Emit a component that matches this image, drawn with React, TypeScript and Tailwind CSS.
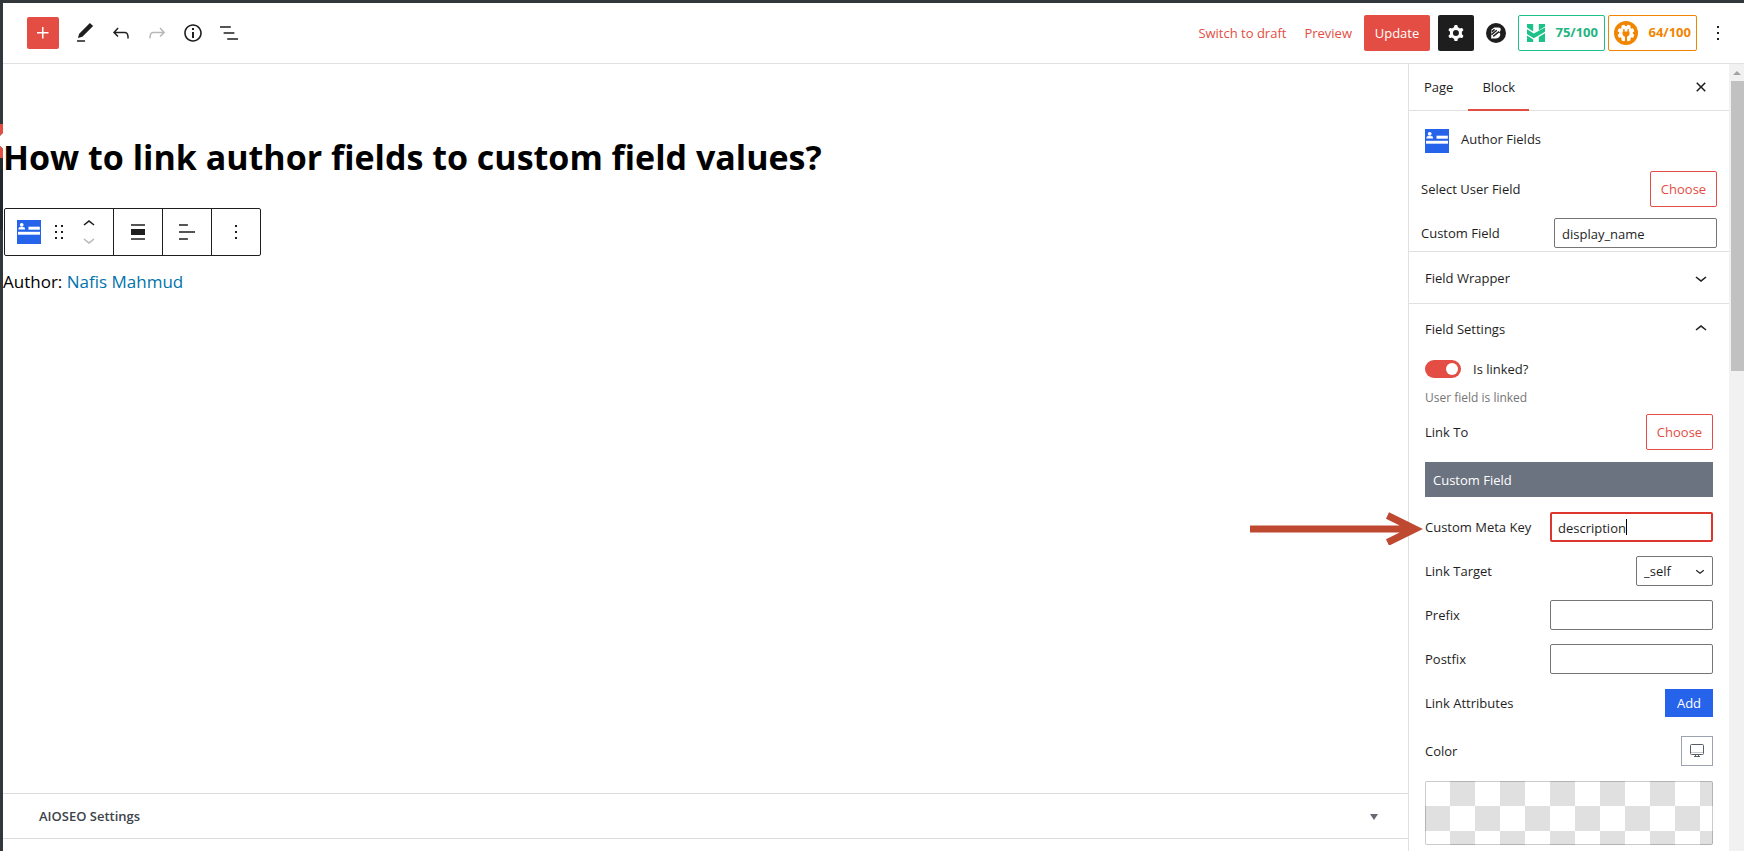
import type { ReactNode } from 'react';

const icons = {
  plus: 'M11 12.5V17.5H12.5V12.5H17.5V11H12.5V6H11V11H6V12.5H11Z',
  pencil: 'M20.1 5.1L16.9 2 6.2 12.7l-1.3 4.4 4.5-1.3L20.1 5.1zM4 20.8h8v-1.5H4v1.5z',
  undo: 'M18.3 11.7c-.6-.6-1.4-.9-2.3-.9H6.7l2.9-3.3-1.1-1-4.5 5L8.5 16l1-1-2.7-2.7H16c.5 0 .9.2 1.3.5 1 1 1 3.4 1 4.5v.3h1.5v-.2c0-1.5 0-4.3-1.5-5.7z',
  redo: 'M15.6 6.5l-1.1 1 2.9 3.3H8c-.9 0-1.7.3-2.3.9-1.4 1.5-1.4 4.2-1.4 5.6v.2h1.5v-.3c0-1.1 0-3.5 1-4.5.3-.3.7-.5 1.3-.5h9.2L14.5 15l1.1 1.1 4.6-4.6-4.6-5z',
  info: 'M12 3.2c-4.8 0-8.8 3.9-8.8 8.8 0 4.8 3.9 8.8 8.8 8.8 4.8 0 8.8-3.9 8.8-8.8 0-4.8-4-8.8-8.8-8.8zm0 16c-4 0-7.2-3.3-7.2-7.2C4.8 8 8 4.8 12 4.8s7.2 3.3 7.2 7.2c0 4-3.2 7.2-7.2 7.2zM11 17h2v-6h-2v6zm0-8h2V7h-2v2z',
  list: 'M13.8 5.2H3v1.5h10.8V5.2zm-3.6 12v1.5H21v-1.5H10.2zm7.2-6H6.6v1.5h10.8v-1.5z',
  cog: 'M10.289 4.836A1 1 0 0111.275 4h1.306a1 1 0 01.987.836l.244 1.466c.787.26 1.503.679 2.108 1.218l1.393-.522a1 1 0 011.216.437l.653 1.13a1 1 0 01-.23 1.273l-1.148.944a6.025 6.025 0 010 2.435l1.149.946a1 1 0 01.23 1.272l-.653 1.13a1 1 0 01-1.216.437l-1.394-.522c-.605.54-1.32.958-2.108 1.218l-.244 1.466a1 1 0 01-.987.836h-1.306a1 1 0 01-.986-.836l-.244-1.466a5.995 5.995 0 01-2.108-1.218l-1.394.522a1 1 0 01-1.217-.436l-.653-1.131a1 1 0 01.23-1.272l1.149-.946a6.026 6.026 0 010-2.435l-1.148-.944a1 1 0 01-.23-1.272l.653-1.131a1 1 0 011.217-.437l1.393.522a5.994 5.994 0 012.108-1.218l.244-1.466zM14.929 12a3 3 0 11-6 0 3 3 0 016 0z',
  more: 'M13 19h-2v-2h2v2zm0-6h-2v-2h2v2zm0-6h-2V5h2v2z',
  close: 'M12 13.06l3.712 3.713 1.061-1.06L13.061 12l3.712-3.712-1.06-1.06L12 10.938 8.288 7.227l-1.061 1.06L10.939 12l-3.712 3.712 1.06 1.061L12 13.061z',
  down: 'M17.5 11.6L12 16l-5.5-4.4.9-1.2L12 14l4.5-3.6 1 1.2z',
  up: 'M6.5 12.4L12 8l5.5 4.4-.9 1.2L12 10l-4.5 3.6-1-1.2z',
  drag: 'M8 7h2V5H8v2zm0 6h2v-2H8v2zm0 6h2v-2H8v2zm6-14v2h2V5h-2zm0 8h2v-2h-2v2zm0 6h2v-2h-2v2z',
  blockAlign: 'M5 15h14V9H5v6zm0 4.8h14v-1.5H5v1.5zM5 4.2v1.5h14V4.2H5z',
  textAlign: 'M4 19.8h8.9v-1.5H4v1.5zm8.9-15.6H4v1.5h8.9V4.2zm-8.9 7v1.5h16v-1.5H4z',
};

function Icon({ name, className = 'size-6' }: { name: keyof typeof icons; className?: string }) {
  return (
    <svg viewBox="0 0 24 24" className={`shrink-0 ${className}`} fill="currentColor" fillRule="evenodd" aria-hidden="true">
      <path d={icons[name]} />
    </svg>
  );
}

function AuthorIcon() {
  return (
    <svg viewBox="0 0 24 24" className="size-6 shrink-0" aria-hidden="true">
      <rect width="24" height="24" fill="#2563eb" />
      <g fill="#fff">
        <circle cx="4.7" cy="4.8" r="1.9" />
        <path d="M1.5 9.5V8.4q0-1.4 3.2-1.4T8 8.4v1.1z" />
        <rect x="11.5" y="6.7" width="11.3" height="3" />
        <rect x="1" y="11.8" width="22" height="2.9" />
      </g>
    </svg>
  );
}

function ToolButton({ label, icon, className = '' }: { label: string; icon: keyof typeof icons; className?: string }) {
  return (
    <button aria-label={label} className={`flex size-9 items-center justify-center ${className}`}>
      <Icon name={icon} />
    </button>
  );
}

function BrizyIcon() {
  return (
    <svg viewBox="0 0 20 20" className="size-5" aria-hidden="true">
      <circle cx="10" cy="10" r="10" fill="#1e1e1e" />
      <path d="M5.500 6.500L8.300 4.500H12.500c2 0 2.800 1.500 2 3.100-.4.900-1 1.500-1.700 1.900 1.500.6 1.800 1.900 1.200 3.200-.8 1.800-2.300 2.800-4.200 2.800H5.200V12.200z" fill="#fff" />
      <path d="M5.400 11.600L10.800 7.200M7.200 13.400L13 8.600M8.600 6.400L6 8.600" stroke="#1e1e1e" strokeWidth="1.400" />
    </svg>
  );
}

function HeadlineIcon() {
  return (
    <svg viewBox="0 0 18 18" className="size-[18px]" fill="#1cc288" aria-hidden="true">
      <path d="M0 0h6.200v7.600L0 3.600z" />
      <path d="M11.800 0H18v2.400l-6.200 4z" />
      <path d="M0 5.200l6.800 4.400L18 3.600v4.200L6.800 14.200 0 9.900z" />
      <path d="M0 11.500l6.200 4V18H0z" />
      <path d="M11.800 12.900L18 9.300V18h-6.200z" />
    </svg>
  );
}

function SeoIcon() {
  return (
    <svg viewBox="0 0 24 24" className="size-6" aria-hidden="true">
      <circle cx="12" cy="12" r="12" fill="#f18500" />
      <g fill="#fff">
        <circle cx="12" cy="12" r="7" />
        {[0, 45, 90, 135, 180, 225, 270, 315].map((a) => (
          <rect key={a} x="10.200" y="3.600" width="3.600" height="4" rx=".8" transform={`rotate(${a + 22.5} 12 12)`} />
        ))}
      </g>
      <path d="M9.200 8h1.400v2.400h2.800V8h1.400v2.400h.7v2.200c0 1.700-1 2.800-2.500 3.100V20h-2v-4.300c-1.500-.3-2.500-1.400-2.500-3.100v-2.200h.7z" fill="#f18500" />
    </svg>
  );
}

function Row({ id, label, height = 'h-[30px]', children }: { id: string; label: string; height?: string; children: ReactNode }) {
  return (
    <div className={`relative flex items-center justify-between ${height}`}>
      <label htmlFor={id} className="pt-0.5">{label}</label>
      {children}
    </div>
  );
}

const field = 'h-[30px] w-[163px] rounded-xs border border-[#757575] px-[7px] pt-0.5 text-[13px] outline-none';
const choose = 'h-9 w-[67px] rounded-xs border border-[#e34d43] pt-0.5 text-[#e34d43]';

function Arrow() {
  return (
    <svg viewBox="0 0 174 36" className="pointer-events-none absolute right-full mr-0.5 h-9 w-[174px]" fill="none" stroke="#bf4830" strokeWidth="7" aria-hidden="true">
      <path d="M1 20H164M138.500 6.500L166 20L138.500 33.500" />
    </svg>
  );
}

function TopBar() {
  return (
    <header className="flex h-[61px] items-center justify-between border-b border-[#e0e0e0] pr-2 pl-6">
      <div className="flex items-center">
        <button aria-label="Add block" className="mr-2 flex size-8 items-center justify-center rounded-xs bg-[#e34d43] text-white">
          <Icon name="plus" />
        </button>
        <ToolButton label="Edit" icon="pencil" />
        <ToolButton label="Undo" icon="undo" />
        <ToolButton label="Redo" icon="redo" className="text-[#b8b8b8]" />
        <ToolButton label="Details" icon="info" />
        <ToolButton label="List view" icon="list" />
      </div>
      <div className="flex items-center">
        <button className="mr-[18px] pt-0.5 text-[#e34d43]">Switch to draft</button>
        <button className="mr-3 pt-0.5 text-[#e34d43]">Preview</button>
        <button className="mr-2 h-9 w-[66px] rounded-xs bg-[#e34d43] pt-0.5 text-white">Update</button>
        <button aria-label="Settings" className="flex size-9 items-center justify-center rounded-xs bg-[#1e1e1e] text-white">
          <Icon name="cog" />
        </button>
        <button aria-label="Builder" className="mx-3">
          <BrizyIcon />
        </button>
        <button className="mr-[3px] flex h-9 w-[87px] items-center justify-between rounded-xs border border-[#1cc288] pr-1.5 pl-2 font-bold text-[#1fb57f]">
          <HeadlineIcon />
          75/100
        </button>
        <button className="flex h-9 w-[89px] items-center justify-between rounded-xs border border-[#f18500] px-[5px] font-bold text-[#f18500]">
          <SeoIcon />
          64/100
        </button>
        <ToolButton label="Options" icon="more" className="ml-[3px]" />
      </div>
    </header>
  );
}

function Editor() {
  return (
    <main className="flex min-w-0 flex-1 flex-col">
      <div className="flex-1">
        <h1 className="pt-[66px] text-[34px] leading-[54px] font-bold text-black">How to link author fields to custom field values?</h1>
        <div className="mt-6 ml-px flex h-12 w-fit divide-x divide-[#1e1e1e] rounded-xs border border-[#1e1e1e]">
          <div className="flex w-[109px] items-center pl-3">
            <AuthorIcon />
            <button aria-label="Drag" className="ml-1.5">
              <Icon name="drag" />
            </button>
            <div className="ml-1.5 flex flex-col">
              <button aria-label="Move up" className="-mb-2">
                <Icon name="up" />
              </button>
              <button aria-label="Move down" className="text-[#b8b8b8]">
                <Icon name="down" />
              </button>
            </div>
          </div>
          <button aria-label="Align block" className="flex w-[49px] items-center justify-center">
            <Icon name="blockAlign" />
          </button>
          <button aria-label="Align text" className="flex w-[49px] items-center justify-center">
            <Icon name="textAlign" />
          </button>
          <button aria-label="More" className="flex w-12 items-center justify-center">
            <Icon name="more" />
          </button>
        </div>
        <p className="mt-3 text-[17px] leading-7 text-black">
          Author: <a href="#author" className="text-[#0073aa]">Nafis Mahmud</a>
        </p>
      </div>
      <button className="mb-3 flex h-[46px] items-center justify-between border-y border-[#dcdcde] pt-0.5 pr-[30px] pl-9 font-semibold text-[#3c434a]">
        AIOSEO Settings
        <svg viewBox="0 0 8 6" className="h-1.5 w-2" fill="#646970" aria-hidden="true">
          <path d="M0 0h8L4 6z" />
        </svg>
      </button>
    </main>
  );
}

function Sidebar() {
  return (
    <aside className="w-[321px] shrink-0 border-l border-[#e0e0e0]">
      <div className="flex h-[47px] items-stretch border-b border-[#e0e0e0]">
        <button className="px-[15px] pt-0.5 font-medium">Page</button>
        <button className="-mb-px border-b-2 border-[#e34d43] px-[14px] pt-0.5 font-medium">Block</button>
        <button aria-label="Close settings" className="mr-4 ml-auto">
          <Icon name="close" />
        </button>
      </div>
      <section className="border-b border-[#e0e0e0] px-3 pb-[3px]">
        <div className="flex h-[60px] items-center gap-3 pl-1">
          <AuthorIcon />
          <h2 className="pb-0.5 font-medium">Author Fields</h2>
        </div>
        <Row id="user-field" label="Select User Field" height="h-9">
          <button id="user-field" className={choose}>Choose</button>
        </Row>
        <div className="h-[11px]" />
        <Row id="custom-field" label="Custom Field">
          <input id="custom-field" defaultValue="display_name" className={field} />
        </Row>
      </section>
      <button className="flex h-[52px] w-full items-center justify-between border-b border-[#e0e0e0] px-4 font-medium">
        <span className="pt-0.5">Field Wrapper</span>
        <Icon name="down" />
      </button>
      <section className="px-4">
        <button className="flex h-[50px] w-full items-center justify-between font-medium">
          <span className="pt-0.5">Field Settings</span>
          <Icon name="up" />
        </button>
        <label className="mt-1.5 flex h-[18px] items-center gap-3">
          <input type="checkbox" defaultChecked className="peer sr-only" />
          <span className="flex h-[18px] w-9 items-center justify-end rounded-full bg-[#e34d43] p-[3px]">
            <span className="size-3 rounded-full bg-white" />
          </span>
          <span className="pt-0.5">Is linked?</span>
        </label>
        <p className="mt-3 mb-2 text-[12px] leading-4 text-[#757575]">User field is linked</p>
        <Row id="link-to" label="Link To" height="h-9">
          <button id="link-to" className={choose}>Choose</button>
        </Row>
        <div className="mt-3 mb-[15px] flex h-[35px] items-center bg-[#6b7280] px-2 pt-0.5 text-white">Custom Field</div>
        <div className="flex flex-col gap-[14px]">
          <Row id="meta-key" label="Custom Meta Key">
            <Arrow />
            <input id="meta-key" defaultValue="description" className="h-[30px] w-[163px] rounded-xs border-2 border-[#dc362e] px-1.5 pt-0.5 outline-none" />
            <span className="pointer-events-none absolute right-[86px] h-4 w-px bg-black" />
          </Row>
          <Row id="target" label="Link Target">
            <span className="relative">
              <select id="target" className="h-[30px] w-[77px] appearance-none rounded-xs border border-[#757575] px-[7px] pt-0.5 outline-none">
                <option>_self</option>
              </select>
              <Icon name="down" className="pointer-events-none absolute top-1.5 right-1 size-[18px]" />
            </span>
          </Row>
          <Row id="prefix" label="Prefix">
            <input id="prefix" className={field} />
          </Row>
          <Row id="postfix" label="Postfix">
            <input id="postfix" className={field} />
          </Row>
          <Row id="attributes" label="Link Attributes">
            <button id="attributes" className="h-7 w-12 bg-[#2563eb] pt-0.5 text-white">Add</button>
          </Row>
        </div>
        <div className="h-[18px]" />
        <Row id="color" label="Color">
          <button id="color" aria-label="Device" className="flex h-[30px] w-8 items-center justify-center border border-[#9ca3af] pb-0.5">
            <svg viewBox="0 0 14 13" className="h-[13px] w-3.5" fill="none" stroke="#555d66" aria-hidden="true">
              <rect x=".5" y=".5" width="13" height="10" rx="1" />
              <path d="M1 8.500h12" stroke="#c4c6c8" />
              <path d="M4 12.500h6M5.500 10v2M8.500 10v2" />
            </svg>
          </button>
        </Row>
        <button
          aria-label="Pick a color"
          className="mt-[15px] mb-1.5 block h-16 w-full rounded-xs border border-black/20 bg-[conic-gradient(#e0e0e0_25%,#fff_0_50%,#e0e0e0_0_75%,#fff_0)] bg-[size:50px_50px] bg-origin-border"
        />
      </section>
    </aside>
  );
}

export default function App() {
  return (
    <div className="flex min-h-screen flex-col border-t-3 border-[#32373c] bg-white font-['Open_Sans','Noto_Sans',sans-serif] text-[13px] text-[#1e1e1e]">
      <div className="flex flex-1">
        <div className="flex w-[3px] shrink-0 flex-col bg-[#32373c]">
          <svg viewBox="0 0 3 34" className="mt-[121px] h-[34px] w-[3px]" aria-hidden="true">
            <path d="M0 0h3v9L0 12z" fill="#e34d43" />
            <path d="M3 9v16L0 22V12z" fill="#fff" />
            <path d="M0 22l3 3v9H0z" fill="#e34d43" />
          </svg>
          <div className="h-[72px] bg-[#23282d]" />
        </div>
        <div className="flex min-w-0 flex-1 flex-col">
          <TopBar />
          <div className="flex flex-1">
            <Editor />
            <Sidebar />
            <div className="flex w-[15px] shrink-0 flex-col bg-[#f1f1f1]">
              <svg viewBox="0 0 15 17" className="h-[17px]" fill="#a3a3a3" aria-hidden="true">
                <path d="M4 11h8L8 7z" />
              </svg>
              <div className="ml-0.5 h-[290px] bg-[#c1c1c1]" />
            </div>
          </div>
        </div>
      </div>
    </div>
  );
}
